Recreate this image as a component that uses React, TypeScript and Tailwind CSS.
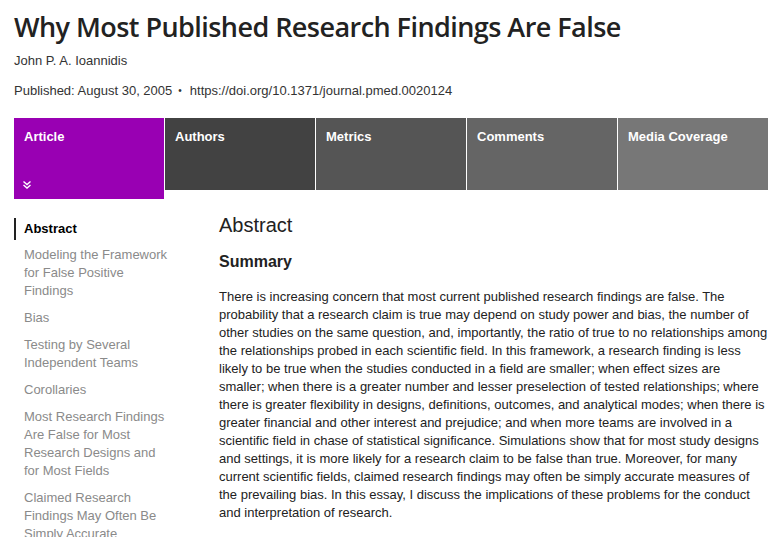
import React from "react";

const tabs = [
  { label: "Article", bg: "bg-[#9900b3]", active: true },
  { label: "Authors", bg: "bg-[#424242]" },
  { label: "Metrics", bg: "bg-[#555555]" },
  { label: "Comments", bg: "bg-[#656565]" },
  { label: "Media Coverage", bg: "bg-[#777777]" },
];

const toc = [
  "Modeling the Framework for False Positive Findings",
  "Bias",
  "Testing by Several Independent Teams",
  "Corollaries",
  "Most Research Findings Are False for Most Research Designs and for Most Fields",
  "Claimed Research Findings May Often Be Simply Accurate Measures of the Prevailing Bias",
];

const lines = [
  "There is increasing concern that most current published research findings are false. The",
  "probability that a research claim is true may depend on study power and bias, the number of",
  "other studies on the same question, and, importantly, the ratio of true to no relationships among",
  "the relationships probed in each scientific field. In this framework, a research finding is less",
  "likely to be true when the studies conducted in a field are smaller; when effect sizes are",
  "smaller; when there is a greater number and lesser preselection of tested relationships; where",
  "there is greater flexibility in designs, definitions, outcomes, and analytical modes; when there is",
  "greater financial and other interest and prejudice; and when more teams are involved in a",
  "scientific field in chase of statistical significance. Simulations show that for most study designs",
  "and settings, it is more likely for a research claim to be false than true. Moreover, for many",
  "current scientific fields, claimed research findings may often be simply accurate measures of",
  "the prevailing bias. In this essay, I discuss the implications of these problems for the conduct",
  "and interpretation of research.",
];

export default function App() {
  return (
    <div className="w-[781px] h-[537px] overflow-hidden bg-white font-['Liberation_Sans',Arial,sans-serif]">
      <div className="pl-[14px] pt-[9px]">
        <h1 className="font-['Open_Sans',sans-serif] font-semibold text-[27px] leading-[36px] text-[#222] tracking-[-0.55px]">
          Why Most Published Research Findings Are False
        </h1>
        <div className="mt-[7px] text-[13px] leading-[18px] text-[#333]">John P. A. Ioannidis</div>
        <div className="mt-[12px] text-[13px] leading-[18px] text-[#333] flex items-center">
          <span>Published: August 30, 2005</span>
          <span className="mx-[6px] text-[10px]">•</span>
          <span className="ml-[2px]">https://doi.org/10.1371/journal.pmed.0020124</span>
        </div>
        <div className="mt-[18px] flex gap-px items-start">
          {tabs.map((t) => (
            <div
              key={t.label}
              className={`${t.bg} w-[150px] ${t.active ? "h-[81px]" : "h-[72px]"} relative px-[10px] pt-[10px] text-white font-bold text-[13px] leading-[18px]`}
            >
              {t.label}
              {t.active && (
                <svg className="absolute left-[8px] top-[62px]" width="10" height="10" viewBox="0 0 10 10" fill="none" stroke="white" strokeWidth="1.4">
                  <path d="M1.5 1.5 L5 4.5 L8.5 1.5" />
                  <path d="M1.5 5 L5 8 L8.5 5" />
                </svg>
              )}
            </div>
          ))}
        </div>
      </div>
      <div className="flex pl-[14px] mt-[19px]">
        <div className="w-[205px] shrink-0">
          <div className="border-l-[2px] border-[#222] pl-[8px] py-[2px] text-[13px] leading-[18px] font-bold text-black">
            Abstract
          </div>
          <div className="pl-[10px] flex flex-col gap-[9px] mt-[6px]">
            {toc.map((t) => (
              <div key={t} className="w-[149px] text-[13px] leading-[18px] text-[#8a8a8a]">
                {t}
              </div>
            ))}
          </div>
        </div>
        <div className="flex-1 min-w-0">
          <h2 className="text-[20px] leading-[24px] text-[#222] -mt-[5px]">Abstract</h2>
          <h3 className="mt-[15px] text-[16px] leading-[20px] font-bold text-[#222]">Summary</h3>
          <p className="mt-[16px] text-[13px] leading-[18px] text-[#222]">
            {lines.map((l, i) => (
              <span key={i} className="block whitespace-nowrap">
                {l}
              </span>
            ))}
          </p>
        </div>
      </div>
    </div>
  );
}
